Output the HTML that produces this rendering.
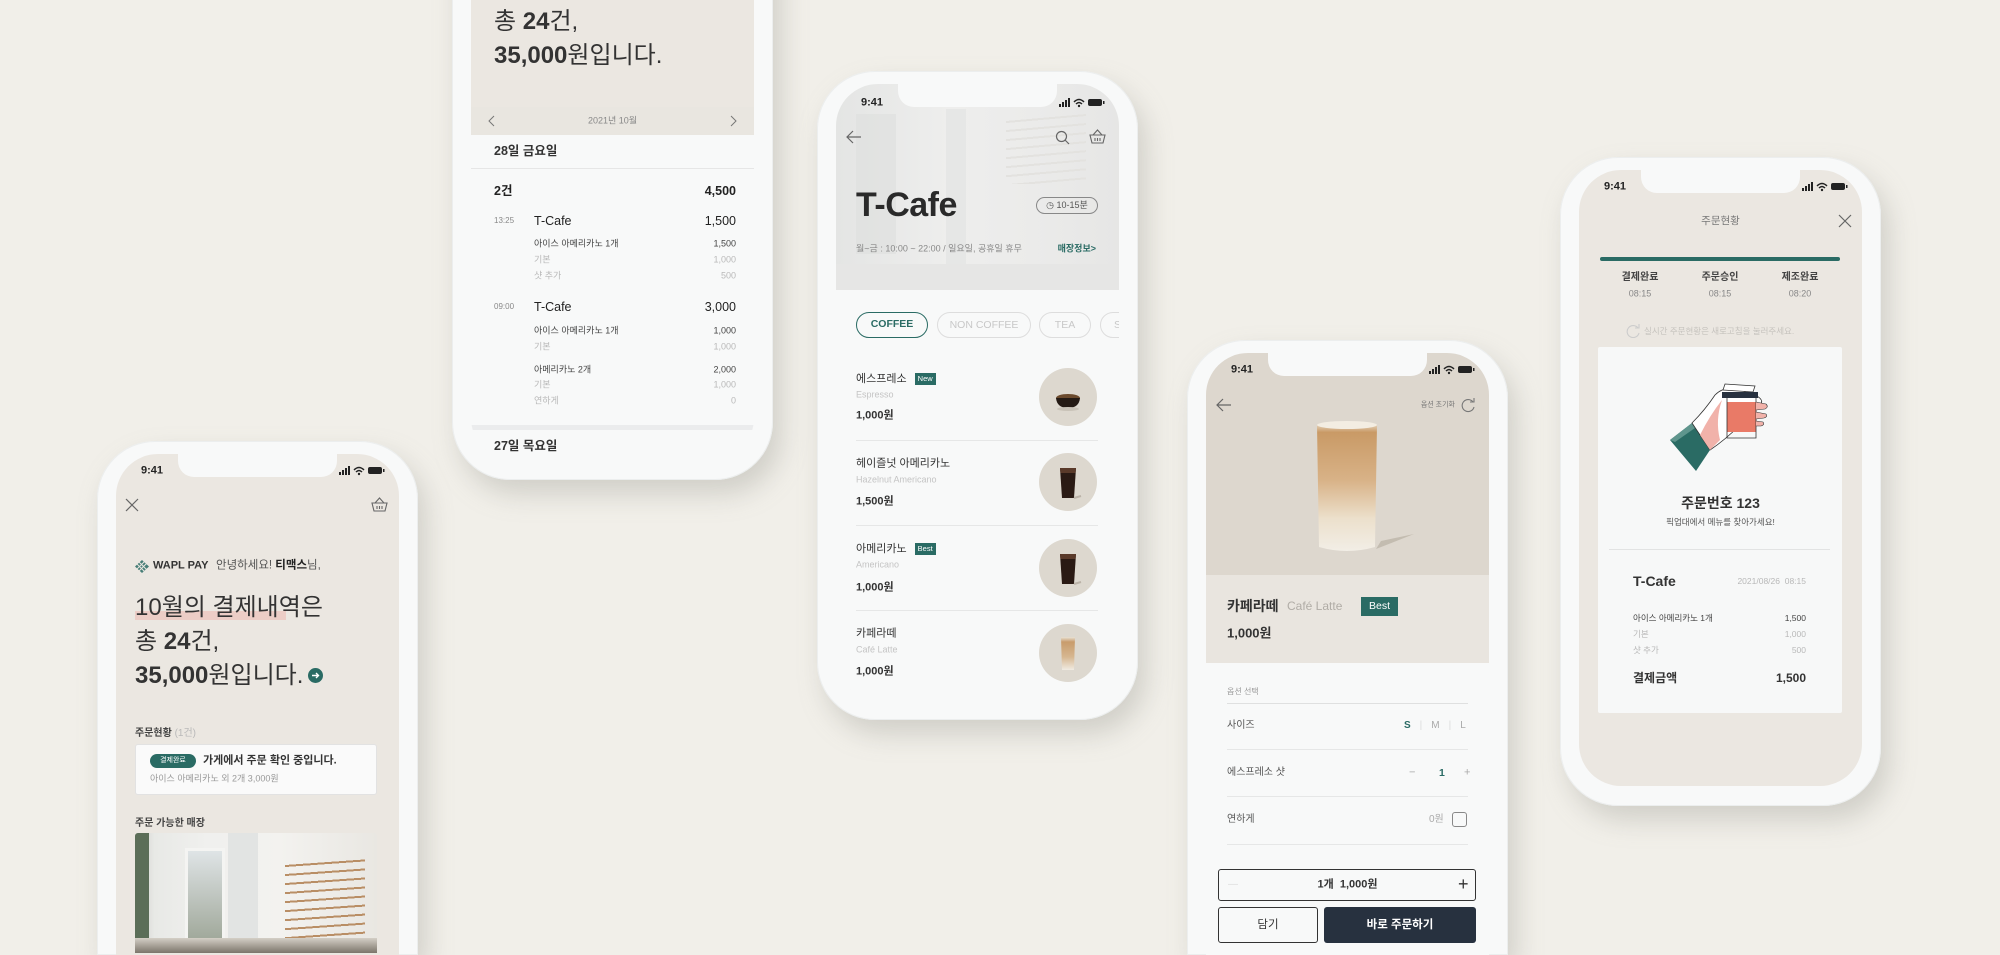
<!DOCTYPE html>
<html><head><meta charset="utf-8">
<style>
*{margin:0;padding:0;box-sizing:border-box}
html,body{width:2000px;height:955px;overflow:hidden}
body{background:#f1efe9;font-family:"Liberation Sans","Noto Sans CJK KR",sans-serif;color:#222}
#wrap{position:relative;width:2000px;height:955px;overflow:hidden;background:#f1efe9}
.ph{position:absolute;width:321px;height:649px;border-radius:58px;background:#f8f9f9;box-shadow:8px 14px 26px rgba(150,150,140,.35),0 0 0 1px #eceeee inset}
.sc{position:absolute;left:19px;top:13px;width:283px;height:616px;border-radius:42px;overflow:hidden;background:#f8f9f9}
.cut{border-bottom-left-radius:0;border-bottom-right-radius:0}
.notch{position:absolute;left:62px;top:0;width:159px;height:23px;background:#f8f9f9;border-radius:0 0 16px 16px;z-index:5}
.t{position:absolute;white-space:nowrap;line-height:1}
.c{transform:translateY(-50%)}
.r{text-align:right}
.time{font-size:11px;font-weight:bold;left:25px}
.sb{position:absolute;right:14px;width:46px;height:10px}
.g{color:#b9b9b9}
.grn{color:#2a6b64}
.line{position:absolute;height:1px;background:#e6e7e7}
.hb{font-weight:700}
</style></head><body><div id="wrap">

<!-- PHONE 1 -->
<div class="ph cut" style="left:97px;top:441px;height:514px">
 <div class="sc cut" style="background:#ebe7e1;height:501px">
  <div class="notch" style="background:#f8f9f9"></div>
  <div class="t c time" style="top:17px">9:41</div>
  <svg class="sb" style="top:12px" viewBox="0 0 46 10"><rect x="0" y="6" width="2" height="3" fill="#222"/><rect x="3" y="4" width="2" height="5" fill="#222"/><rect x="6" y="2" width="2" height="7" fill="#222"/><rect x="9" y="0" width="2" height="9" fill="#222"/><path d="M15 4 Q20 -1 25 4 M17 6 Q20 3 23 6" stroke="#222" stroke-width="1.5" fill="none"/><circle cx="20" cy="8" r="1.2" fill="#222"/><rect x="29" y="1" width="14" height="7" rx="2" fill="#222"/><rect x="44" y="3" width="1.5" height="3" fill="#222"/></svg>
  <svg style="position:absolute;left:9px;top:44px" width="14" height="14" viewBox="0 0 14 14"><path d="M1 1L13 13M13 1L1 13" stroke="#666" stroke-width="1.2"/></svg>
  <svg style="position:absolute;left:255px;top:43px" width="17" height="15" viewBox="0 0 17 15"><path d="M1 6H16L14 14H3Z M4 6L8.5 1L13 6 M6 9V12M8.5 9V12M11 9V12" stroke="#666" stroke-width="1.1" fill="none"/></svg>
  <svg style="position:absolute;left:19px;top:106px" width="14" height="13" viewBox="0 0 14 13"><g fill="#2a6b64"><path d="M7 0L14 6.5L7 13L0 6.5Z" opacity=".85"/></g><path d="M2 4L10 12M4 2L12 10M10 1L2 9M12 3L4 11" stroke="#ebe7e1" stroke-width="1"/></svg>
  <div class="t c" style="left:37px;top:112px;font-size:11px;font-weight:bold;color:#333">WAPL PAY</div>
  <div class="t c" style="left:100px;top:112px;font-size:11.5px;color:#555">안녕하세요! <b style="color:#222">티맥스</b>님,</div>
  <div style="position:absolute;left:19px;top:157px;width:151px;height:9px;background:#eccdc6"></div>
  <div class="t" style="left:19px;top:137px;font-size:24px;line-height:34px;color:#333">10월의 결제내역은<br>총 <span class="hb">24</span>건,<br><span class="hb">35,000</span>원입니다.</div>
  <svg style="position:absolute;left:192px;top:214px" width="15" height="15" viewBox="0 0 15 15"><circle cx="7.5" cy="7.5" r="7.5" fill="#2a6b64"/><path d="M4 7.5H10.5M8 5L10.5 7.5L8 10" stroke="#fff" stroke-width="1.4" fill="none"/></svg>
  <div class="t c" style="left:19px;top:280px;font-size:10px;font-weight:bold;color:#444">주문현황 <span class="g" style="font-weight:normal">(1건)</span></div>
  <div style="position:absolute;left:19px;top:290px;width:242px;height:51px;background:#fafafa;border:1px solid #e2e2e2;border-radius:3px"></div>
  <div class="t" style="left:34px;top:300px;width:46px;height:14px;border-radius:7px;background:#2a6b64;color:#fff;font-size:7px;line-height:14px;text-align:center">결제완료</div>
  <div class="t c" style="left:87px;top:307px;font-size:11px;font-weight:bold;color:#333">가게에서 주문 확인 중입니다.</div>
  <div class="t c" style="left:34px;top:325px;font-size:9px;color:#999">아이스 아메리카노 외 2개 3,000원</div>
  <div class="t c" style="left:19px;top:370px;font-size:10px;font-weight:bold;color:#444">주문 가능한 매장</div>
  <div style="position:absolute;left:19px;top:379px;width:242px;height:120px;border-radius:3px 3px 0 0;overflow:hidden;background:linear-gradient(90deg,#c9cbc6 0%,#e8e9e6 8%,#f0f0ee 30%,#f3f2ef 60%,#e9e7e2 100%)">
   <div style="position:absolute;left:0;top:0;width:14px;height:120px;background:#5b6e58"></div>
   <div style="position:absolute;left:50px;top:15px;width:40px;height:95px;background:linear-gradient(#dfe4e6,#a0a89a);border:3px solid #f4f4f2"></div>
   <div style="position:absolute;left:93px;top:0;width:30px;height:110px;background:#e2e4e3"></div>
   <div style="position:absolute;left:150px;top:25px;width:80px;height:85px;background:repeating-linear-gradient(176deg,transparent 0 7px,#b98e65 7px 9px)"></div>
   <div style="position:absolute;left:0;top:105px;width:242px;height:15px;background:linear-gradient(#d4cfc6,#7c756b)"></div>
  </div>
 </div>
</div>

<!-- PHONE 2 -->
<div class="ph" style="left:452px;top:-169px">
 <div class="sc">
  <div style="position:absolute;left:0;top:0;width:283px;height:263px;background:#ebe7e1"></div>
  <div style="position:absolute;left:0;top:263px;width:283px;height:28px;background:#e9e6e0"></div>
  <div class="t" style="left:23px;top:127px;font-size:24px;line-height:34px;color:#333">10월의 결제내역은<br>총 <span class="hb">24</span>건,<br><span class="hb">35,000</span>원입니다.</div>
  <svg style="position:absolute;left:17px;top:271px" width="8" height="12" viewBox="0 0 8 12"><path d="M6 1L1 6L6 11" stroke="#777" fill="none"/></svg>
  <svg style="position:absolute;left:258px;top:271px" width="8" height="12" viewBox="0 0 8 12"><path d="M2 1L7 6L2 11" stroke="#777" fill="none"/></svg>
  <div class="t c" style="left:0;width:283px;text-align:center;top:277px;font-size:9px;color:#888">2021년 10월</div>
  <div class="t c" style="left:23px;top:307px;font-size:12.5px;font-weight:bold;color:#333">28일 금요일</div>
  <div class="line" style="left:0;width:283px;top:324px;background:#e6e6e6"></div>
  <div class="t c" style="left:23px;top:347px;font-size:12.5px;font-weight:bold">2건</div>
  <div class="t c r" style="right:18px;top:347px;font-size:12.5px;font-weight:bold">4,500</div>
  <div class="t c" style="left:23px;top:377px;font-size:8px;color:#888">13:25</div>
  <div class="t c" style="left:63px;top:377px;font-size:12.5px;color:#222">T-Cafe</div>
  <div class="t c r" style="right:18px;top:377px;font-size:12.5px">1,500</div>
  <div class="t c" style="left:63px;top:400px;font-size:9px;color:#444">아이스 아메리카노 1개</div><div class="t c r" style="right:18px;top:400px;font-size:9px;color:#444">1,500</div>
  <div class="t c g" style="left:63px;top:416px;font-size:9px">기본</div><div class="t c r g" style="right:18px;top:416px;font-size:9px">1,000</div>
  <div class="t c g" style="left:63px;top:432px;font-size:9px">샷 추가</div><div class="t c r g" style="right:18px;top:432px;font-size:9px">500</div>
  <div class="t c" style="left:23px;top:463px;font-size:8px;color:#888">09:00</div>
  <div class="t c" style="left:63px;top:463px;font-size:12.5px">T-Cafe</div>
  <div class="t c r" style="right:18px;top:463px;font-size:12.5px">3,000</div>
  <div class="t c" style="left:63px;top:487px;font-size:9px;color:#444">아이스 아메리카노 1개</div><div class="t c r" style="right:18px;top:487px;font-size:9px;color:#444">1,000</div>
  <div class="t c g" style="left:63px;top:503px;font-size:9px">기본</div><div class="t c r g" style="right:18px;top:503px;font-size:9px">1,000</div>
  <div class="t c" style="left:63px;top:526px;font-size:9px;color:#444">아메리카노 2개</div><div class="t c r" style="right:18px;top:526px;font-size:9px;color:#444">2,000</div>
  <div class="t c g" style="left:63px;top:541px;font-size:9px">기본</div><div class="t c r g" style="right:18px;top:541px;font-size:9px">1,000</div>
  <div class="t c g" style="left:63px;top:557px;font-size:9px">연하게</div><div class="t c r g" style="right:18px;top:557px;font-size:9px">0</div>
  <div style="position:absolute;left:0;top:581px;width:283px;height:5px;background:#ebeced"></div>
  <div class="t c" style="left:23px;top:602px;font-size:12.5px;font-weight:bold;color:#333">27일 목요일</div>
 </div>
</div>

<!-- PHONE 3 -->
<div class="ph" style="left:817px;top:71px">
 <div class="sc">
  <div style="position:absolute;left:0;top:0;width:283px;height:206px;background:linear-gradient(90deg,#e4e5e4,#eeeeed 40%,#ebebea 70%,#e6e6e5)">
   <div style="position:absolute;left:20px;top:30px;width:40px;height:140px;background:#e0e1e0;opacity:.8"></div>
   <div style="position:absolute;left:110px;top:25px;width:20px;height:180px;background:#e6e7e6"></div>
   <div style="position:absolute;left:170px;top:30px;width:80px;height:70px;background:repeating-linear-gradient(175deg,transparent 0 7px,#e3e2df 7px 9px)"></div>
   <div style="position:absolute;left:0;top:180px;width:283px;height:26px;background:#e6e6e5"></div>
  </div>
  <div class="notch"></div>
  <div class="t c time" style="top:19px">9:41</div>
  <svg class="sb" style="top:14px" viewBox="0 0 46 10"><rect x="0" y="6" width="2" height="3" fill="#222"/><rect x="3" y="4" width="2" height="5" fill="#222"/><rect x="6" y="2" width="2" height="7" fill="#222"/><rect x="9" y="0" width="2" height="9" fill="#222"/><path d="M15 4 Q20 -1 25 4 M17 6 Q20 3 23 6" stroke="#222" stroke-width="1.5" fill="none"/><circle cx="20" cy="8" r="1.2" fill="#222"/><rect x="29" y="1" width="14" height="7" rx="2" fill="#222"/><rect x="44" y="3" width="1.5" height="3" fill="#222"/></svg>
  <svg style="position:absolute;left:10px;top:46px" width="16" height="14" viewBox="0 0 16 14"><path d="M15 7H1M7 1L1 7L7 13" stroke="#666" stroke-width="1.2" fill="none"/></svg>
  <svg style="position:absolute;left:219px;top:46px" width="15" height="15" viewBox="0 0 15 15"><circle cx="6.5" cy="6.5" r="5" stroke="#666" stroke-width="1.2" fill="none"/><path d="M10 10L14 14" stroke="#666" stroke-width="1.2"/></svg>
  <svg style="position:absolute;left:253px;top:45px" width="17" height="15" viewBox="0 0 17 15"><path d="M1 6H16L14 14H3Z M4 6L8.5 1L13 6 M6 9V12M8.5 9V12M11 9V12" stroke="#666" stroke-width="1.1" fill="none"/></svg>
  <div class="t c" style="left:20px;top:121px;font-size:34px;font-weight:700;color:#2a2a2a;letter-spacing:-.5px">T-Cafe</div>
  <div class="t" style="left:200px;top:113px;width:62px;height:17px;border:1px solid #888;border-radius:9px;font-size:9px;line-height:15px;text-align:center;color:#555">◷ 10-15분</div>
  <div class="t c" style="left:20px;top:165px;font-size:9px;color:#888">월~금 : 10:00 ~ 22:00 / 일요일, 공휴일 휴무</div>
  <div class="t c r grn" style="right:23px;top:165px;font-size:9px;font-weight:bold">매장정보&gt;</div>
  <div class="t" style="left:20px;top:228px;width:72px;height:26px;border:1.5px solid #2a6b64;border-radius:13px;font-size:10.5px;font-weight:bold;line-height:23px;text-align:center;color:#2a6b64">COFFEE</div>
  <div class="t" style="left:101px;top:228px;width:94px;height:26px;border:1px solid #ddd;border-radius:13px;font-size:10.5px;line-height:24px;text-align:center;color:#c8c8c8">NON COFFEE</div>
  <div class="t" style="left:203px;top:228px;width:52px;height:26px;border:1px solid #ddd;border-radius:13px;font-size:10.5px;line-height:24px;text-align:center;color:#c8c8c8">TEA</div>
  <div class="t" style="left:264px;top:228px;width:50px;height:26px;border:1px solid #ddd;border-radius:13px;font-size:10.5px;line-height:24px;padding-left:13px;color:#c8c8c8">S</div>

  <div class="t c" style="left:20px;top:295px;font-size:11px;color:#333">에스프레소 <span style="display:inline-block;background:#2a6b64;color:#fff;font-size:7.5px;padding:2px 3px;margin-left:5px;vertical-align:1px">New</span></div>
  <div class="t c" style="left:20px;top:311px;font-size:9px;color:#c4c4c4">Espresso</div>
  <div class="t c" style="left:20px;top:332px;font-size:11px;font-weight:bold;color:#333">1,000원</div>
  <div class="line" style="left:20px;width:242px;top:356px"></div>
  <div class="t c" style="left:20px;top:380px;font-size:11px;color:#333">헤이즐넛 아메리카노</div>
  <div class="t c" style="left:20px;top:396px;font-size:9px;color:#c4c4c4">Hazelnut Americano</div>
  <div class="t c" style="left:20px;top:418px;font-size:11px;font-weight:bold;color:#333">1,500원</div>
  <div class="line" style="left:20px;width:242px;top:441px"></div>
  <div class="t c" style="left:20px;top:465px;font-size:11px;color:#333">아메리카노 <span style="display:inline-block;background:#2a6b64;color:#fff;font-size:7.5px;padding:2px 3px;margin-left:5px;vertical-align:1px">Best</span></div>
  <div class="t c" style="left:20px;top:481px;font-size:9px;color:#c4c4c4">Americano</div>
  <div class="t c" style="left:20px;top:504px;font-size:11px;font-weight:bold;color:#333">1,000원</div>
  <div class="line" style="left:20px;width:242px;top:526px"></div>
  <div class="t c" style="left:20px;top:550px;font-size:11px;color:#333">카페라떼</div>
  <div class="t c" style="left:20px;top:566px;font-size:9px;color:#c4c4c4">Café Latte</div>
  <div class="t c" style="left:20px;top:588px;font-size:11px;font-weight:bold;color:#333">1,000원</div>

  <svg style="position:absolute;left:203px;top:284px" width="58" height="58" viewBox="0 0 58 58"><circle cx="29" cy="29" r="29" fill="#ddd8cf"/><ellipse cx="29" cy="30" rx="12" ry="4" fill="#6b4a2d"/><path d="M17 30Q18 40 29 40Q40 40 41 30Z" fill="#241a14"/><ellipse cx="29" cy="41" rx="11" ry="2" fill="#c9c3b8"/></svg>
  <svg style="position:absolute;left:203px;top:369px" width="58" height="58" viewBox="0 0 58 58"><circle cx="29" cy="29" r="29" fill="#ddd8cf"/><path d="M21 15H37L35 45H23Z" fill="#2a1a14"/><path d="M21 15H37L36.5 20H21.5Z" fill="#5a3a2a"/><path d="M35 45L42 43" stroke="#bbb3a8" stroke-width="2"/></svg>
  <svg style="position:absolute;left:203px;top:455px" width="58" height="58" viewBox="0 0 58 58"><circle cx="29" cy="29" r="29" fill="#ddd8cf"/><path d="M21 15H37L35 45H23Z" fill="#2a1a14"/><path d="M21 15H37L36.5 20H21.5Z" fill="#5a3a2a"/><path d="M35 45L42 43" stroke="#bbb3a8" stroke-width="2"/></svg>
  <svg style="position:absolute;left:203px;top:540px" width="58" height="58" viewBox="0 0 58 58"><circle cx="29" cy="29" r="29" fill="#ddd8cf"/><defs><linearGradient id="lt" x1="0" y1="0" x2="0" y2="1"><stop offset="0" stop-color="#e8e2d6"/><stop offset=".15" stop-color="#c89c6c"/><stop offset=".6" stop-color="#d6b690"/><stop offset="1" stop-color="#f0ebe2"/></linearGradient></defs><path d="M22 13H36L35 46H23Z" fill="url(#lt)"/></svg>
 </div>
</div>

<!-- PHONE 4 -->
<div class="ph cut" style="left:1187px;top:340px;height:615px">
 <div class="sc cut" style="height:602px">
  <div style="position:absolute;left:0;top:0;width:283px;height:222px;background:#ddd7ce"></div>
  <div style="position:absolute;left:0;top:222px;width:283px;height:88px;background:#e9e5df"></div>
  <div class="notch"></div>
  <div class="t c time" style="top:17px">9:41</div>
  <svg class="sb" style="top:12px" viewBox="0 0 46 10"><rect x="0" y="6" width="2" height="3" fill="#222"/><rect x="3" y="4" width="2" height="5" fill="#222"/><rect x="6" y="2" width="2" height="7" fill="#222"/><rect x="9" y="0" width="2" height="9" fill="#222"/><path d="M15 4 Q20 -1 25 4 M17 6 Q20 3 23 6" stroke="#222" stroke-width="1.5" fill="none"/><circle cx="20" cy="8" r="1.2" fill="#222"/><rect x="29" y="1" width="14" height="7" rx="2" fill="#222"/><rect x="44" y="3" width="1.5" height="3" fill="#222"/></svg>
  <svg style="position:absolute;left:10px;top:45px" width="16" height="14" viewBox="0 0 16 14"><path d="M15 7H1M7 1L1 7L7 13" stroke="#666" stroke-width="1.2" fill="none"/></svg>
  <div class="t c" style="right:34px;top:52px;font-size:7px;color:#777">옵션 초기화</div>
  <svg style="position:absolute;left:254px;top:45px" width="16" height="15" viewBox="0 0 16 15"><path d="M13 4A6 6 0 1 0 14 9" stroke="#777" stroke-width="1.1" fill="none"/><path d="M10 4H14V0" stroke="#777" stroke-width="1.1" fill="none"/></svg>
  <svg style="position:absolute;left:100px;top:66px" width="110" height="140" viewBox="0 0 110 140"><defs><linearGradient id="gl" x1="0" y1="0" x2="0" y2="1"><stop offset="0" stop-color="#ece4d6"/><stop offset=".08" stop-color="#c99a66"/><stop offset=".45" stop-color="#d8b287"/><stop offset=".75" stop-color="#ece0cc"/><stop offset="1" stop-color="#f2eee6"/></linearGradient></defs><path d="M70 130L108 115L75 122Z" fill="#b8b0a4" opacity=".7"/><path d="M11 6Q41 0 71 6L69 128Q41 136 13 128Z" fill="url(#gl)"/><ellipse cx="41" cy="6" rx="30" ry="4" fill="#f3ede2"/></svg>
  <div class="t c" style="left:21px;top:253px;font-size:14px;font-weight:bold;color:#333">카페라떼</div>
  <div class="t c" style="left:81px;top:253px;font-size:12px;color:#b0aca6">Café Latte</div>
  <div class="t" style="left:155px;top:244px;width:37px;height:19px;background:#2a6b64;color:#fff;font-size:10.5px;line-height:19px;text-align:center">Best</div>
  <div class="t c" style="left:21px;top:280px;font-size:13px;font-weight:bold;color:#333">1,000원</div>
  <div class="t c" style="left:21px;top:339px;font-size:8px;color:#999">옵션 선택</div>
  <div class="line" style="left:21px;width:241px;top:350px;background:#dfe0e0"></div>
  <div class="t c" style="left:21px;top:373px;font-size:10px;color:#555">사이즈</div>
  <div class="t c" style="left:198px;top:373px;font-size:10px;font-weight:bold" ><span class="grn">S</span><span style="color:#ddd;font-weight:normal;margin:0 9px">|</span><span style="color:#aaa;font-weight:normal">M</span><span style="color:#ddd;font-weight:normal;margin:0 9px">|</span><span style="color:#aaa;font-weight:normal">L</span></div>
  <div class="line" style="left:21px;width:241px;top:396px"></div>
  <div class="t c" style="left:21px;top:420px;font-size:10px;color:#555">에스프레소 샷</div>
  <div class="t c" style="left:203px;top:420px;font-size:11px;color:#aaa">−</div>
  <div class="t c grn" style="left:233px;top:420px;font-size:10.5px;font-weight:bold">1</div>
  <div class="t c" style="left:258px;top:420px;font-size:11px;color:#aaa">+</div>
  <div class="line" style="left:21px;width:241px;top:443px"></div>
  <div class="t c" style="left:21px;top:467px;font-size:10px;color:#555">연하게</div>
  <div class="t c" style="left:223px;top:467px;font-size:10px;color:#aaa">0원</div>
  <div style="position:absolute;left:246px;top:459px;width:15px;height:15px;border:1px solid #888;border-radius:3px"></div>
  <div class="line" style="left:21px;width:241px;top:491px"></div>
  <div style="position:absolute;left:12px;top:516px;width:258px;height:32px;border:1px solid #333;border-radius:3px"></div>
  <div class="t c" style="left:22px;top:532px;font-size:10px;color:#ddd">—</div>
  <div class="t c" style="left:0;width:283px;text-align:center;top:532px;font-size:11px;font-weight:bold;color:#333">1개&nbsp;&nbsp;1,000원</div>
  <div class="t c" style="left:252px;top:531px;font-size:18px;color:#333">+</div>
  <div style="position:absolute;left:12px;top:554px;width:100px;height:36px;border:1px solid #333;border-radius:3px;font-size:11.5px;line-height:34px;text-align:center;color:#333">담기</div>
  <div style="position:absolute;left:118px;top:554px;width:152px;height:36px;background:#27313f;border-radius:3px;font-size:11.5px;line-height:36px;text-align:center;color:#fff;font-weight:bold">바로 주문하기</div>
 </div>
</div>

<!-- PHONE 5 -->
<div class="ph" style="left:1560px;top:157px">
 <div class="sc" style="background:#ebe7e1">
  <div class="notch"></div>
  <div class="t c time" style="top:17px">9:41</div>
  <svg class="sb" style="top:12px" viewBox="0 0 46 10"><rect x="0" y="6" width="2" height="3" fill="#222"/><rect x="3" y="4" width="2" height="5" fill="#222"/><rect x="6" y="2" width="2" height="7" fill="#222"/><rect x="9" y="0" width="2" height="9" fill="#222"/><path d="M15 4 Q20 -1 25 4 M17 6 Q20 3 23 6" stroke="#222" stroke-width="1.5" fill="none"/><circle cx="20" cy="8" r="1.2" fill="#222"/><rect x="29" y="1" width="14" height="7" rx="2" fill="#222"/><rect x="44" y="3" width="1.5" height="3" fill="#222"/></svg>
  <div class="t c" style="left:0;width:283px;text-align:center;top:51px;font-size:10.5px;color:#777">주문현황</div>
  <svg style="position:absolute;left:259px;top:44px" width="14" height="14" viewBox="0 0 14 14"><path d="M1 1L13 13M13 1L1 13" stroke="#666" stroke-width="1.2"/></svg>
  <div style="position:absolute;left:21px;top:87px;width:240px;height:4px;border-radius:2px;background:#2a6b64"></div>
  <div class="t c" style="left:21px;width:80px;text-align:center;top:108px;font-size:10px;font-weight:bold;color:#444">결제완료</div>
  <div class="t c" style="left:101px;width:80px;text-align:center;top:108px;font-size:10px;font-weight:bold;color:#444">주문승인</div>
  <div class="t c" style="left:181px;width:80px;text-align:center;top:108px;font-size:10px;font-weight:bold;color:#444">제조완료</div>
  <div class="t c" style="left:21px;width:80px;text-align:center;top:124px;font-size:9px;color:#888">08:15</div>
  <div class="t c" style="left:101px;width:80px;text-align:center;top:124px;font-size:9px;color:#888">08:15</div>
  <div class="t c" style="left:181px;width:80px;text-align:center;top:124px;font-size:9px;color:#888">08:20</div>
  <svg style="position:absolute;left:47px;top:154px" width="15" height="14" viewBox="0 0 15 14"><path d="M12 4A6 6 0 1 0 13 9" stroke="#ccc" stroke-width="1.1" fill="none"/><path d="M9 4H13V0" stroke="#ccc" stroke-width="1.1" fill="none"/></svg>
  <div class="t c" style="left:65px;top:161px;font-size:8.5px;color:#c6c3be">실시간 주문현황은 새로고침을 눌러주세요.</div>
  <div style="position:absolute;left:19px;top:177px;width:244px;height:366px;background:#f7f8f8;border-radius:2px"></div>
  <svg style="position:absolute;left:91px;top:210px" width="100" height="92" viewBox="0 0 100 92"><path d="M0 60L22 43L40 70L26 91Z" fill="#2a6b64"/><path d="M0 60L22 43L25 48L5 62Z" fill="#5f958d"/><path d="M22 43Q35 30 45 15Q55 5 70 10L85 15Q95 20 90 25L80 30Q90 35 85 40L70 45Q55 60 40 70Z" fill="#fff" stroke="#333" stroke-width=".8"/><path d="M52 20Q45 40 50 60L40 70L30 55Q40 35 52 20Z" fill="#f1b2aa"/><path d="M55 4L85 6L83 12L53 10Z" fill="#fff" stroke="#333" stroke-width=".8"/><rect x="52" y="12" width="36" height="6" fill="#27313f"/><rect x="57" y="22" width="29" height="30" fill="#e97a67"/><path d="M57 18V58H86V18" stroke="#333" stroke-width=".8" fill="none"/><path d="M86 22L96 24Q99 27 95 29L86 30M86 32L96 34Q98 37 94 38L86 39M86 41L93 42Q95 45 91 46L86 46" fill="#f1b2aa" stroke="#333" stroke-width=".6"/></svg>
  <div class="t c" style="left:0;width:283px;text-align:center;top:333px;font-size:14px;font-weight:bold;color:#333">주문번호 123</div>
  <div class="t c" style="left:0;width:283px;text-align:center;top:352px;font-size:8.5px;color:#555">픽업대에서 메뉴를 찾아가세요!</div>
  <div class="line" style="left:30px;width:221px;top:379px;background:#e2e3e3"></div>
  <div class="t c" style="left:54px;top:411px;font-size:14px;font-weight:bold;color:#333">T-Cafe</div>
  <div class="t c r" style="right:56px;top:411px;font-size:8.5px;color:#b8b8b8">2021/08/26&nbsp; 08:15</div>
  <div class="t c" style="left:54px;top:448px;font-size:8.5px;color:#444">아이스 아메리카노 1개</div><div class="t c r" style="right:56px;top:448px;font-size:8.5px;color:#444">1,500</div>
  <div class="t c g" style="left:54px;top:464px;font-size:8.5px">기본</div><div class="t c r g" style="right:56px;top:464px;font-size:8.5px">1,000</div>
  <div class="t c g" style="left:54px;top:480px;font-size:8.5px">샷 추가</div><div class="t c r g" style="right:56px;top:480px;font-size:8.5px">500</div>
  <div class="t c" style="left:54px;top:508px;font-size:12px;font-weight:bold;color:#333">결제금액</div>
  <div class="t c r" style="right:56px;top:508px;font-size:12px;font-weight:bold;color:#333">1,500</div>
 </div>
</div>

</div></body></html>
